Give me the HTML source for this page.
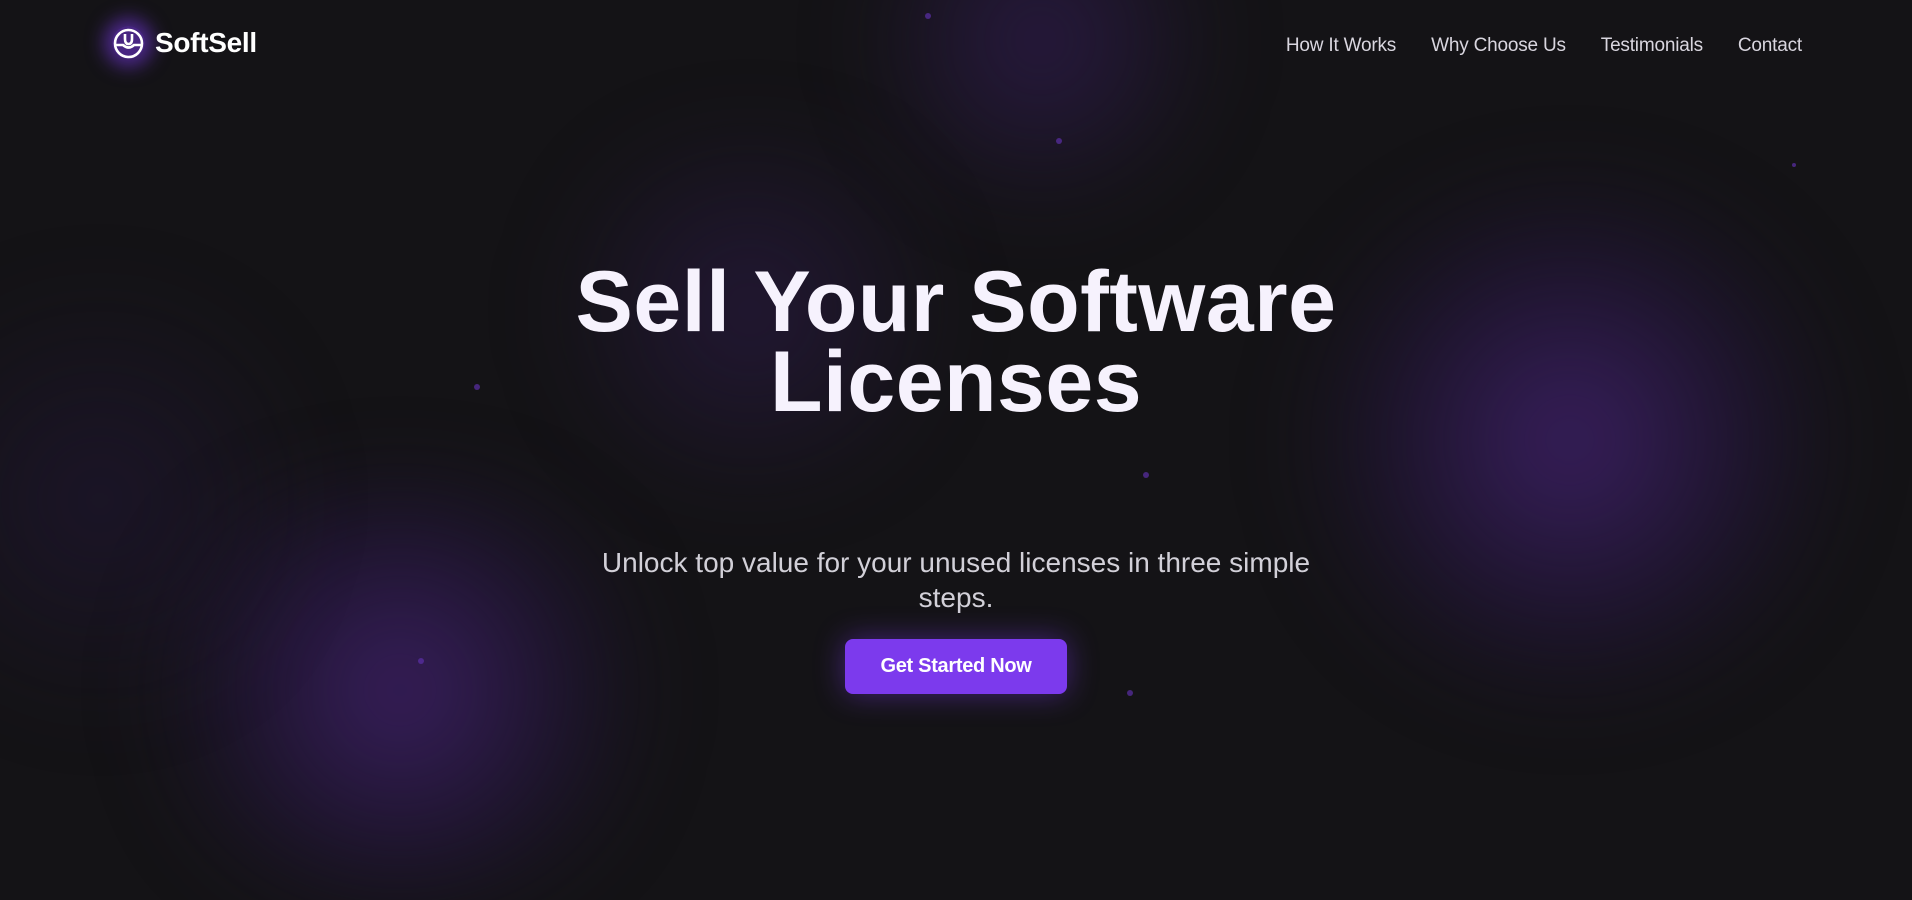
<!DOCTYPE html>
<html><head><style>
html,body{margin:0;padding:0}
body{width:1912px;height:885px;overflow:hidden;background:#141316;font-family:"Liberation Sans",sans-serif;position:relative}
.g{position:absolute;border-radius:50%;filter:blur(40px)}
.logo{position:absolute;left:112px;top:26px;width:33px;height:33px;border-radius:50%;box-shadow:0 0 18px 8px rgba(124,58,237,.55);background:rgba(124,58,237,.5)}
.brand{position:absolute;left:155px;top:27px;font-size:28px;font-weight:bold;color:#fff;letter-spacing:-0.3px}
.links{position:absolute;top:35px;right:110px;font-size:19px;color:#d9d6df;letter-spacing:-0.2px}
.links span{margin-left:35px}
h1{position:absolute;top:262px;left:0;width:1912px;text-align:center;margin:0;font-size:86px;line-height:80px;font-weight:bold;color:#f6f2fd;letter-spacing:0.5px}
p{position:absolute;top:545px;left:0;width:1912px;text-align:center;margin:0;font-size:28px;line-height:35px;color:#d2d0d8}
.btn{position:absolute;left:845px;top:639px;width:222px;height:55px;border-radius:8px;background:#7c3aed;color:#fff;font-weight:bold;font-size:20px;text-align:center;line-height:55px;box-shadow:0 0 30px rgba(124,58,237,.45);letter-spacing:-0.3px}
.d{position:absolute;width:6px;height:6px;border-radius:50%;background:#5b2fa8;opacity:.7}
</style></head><body>
<div class="g" style="left:1290px;top:180px;width:560px;height:520px;background:radial-gradient(circle,rgba(70,35,120,.75),rgba(40,22,70,.4) 50%,rgba(20,19,22,0) 72%)"></div>
<div class="g" style="left:120px;top:480px;width:560px;height:420px;background:radial-gradient(circle,rgba(70,35,120,.75),rgba(40,22,70,.4) 50%,rgba(20,19,22,0) 72%)"></div>
<div class="g" style="left:860px;top:-150px;width:360px;height:380px;background:radial-gradient(circle,rgba(55,30,95,.6),rgba(20,19,22,0) 70%)"></div>
<div class="g" style="left:520px;top:130px;width:460px;height:360px;background:radial-gradient(circle,rgba(50,28,85,.5),rgba(20,19,22,0) 70%)"></div>
<div class="g" style="left:-100px;top:250px;width:400px;height:500px;background:radial-gradient(circle,rgba(40,24,70,.4),rgba(20,19,22,0) 70%)"></div>
<div class="d" style="left:925px;top:13px"></div>
<div class="d" style="left:474px;top:384px"></div>
<div class="d" style="left:1143px;top:472px"></div>
<div class="d" style="left:1127px;top:690px"></div>
<div class="d" style="left:418px;top:658px"></div>
<div class="d" style="left:1056px;top:138px"></div>
<div class="d" style="left:1792px;top:163px;width:4px;height:4px"></div>
<div class="logo"></div>
<svg style="position:absolute;left:112px;top:27px" width="33" height="33" viewBox="0 0 33 33" fill="none" stroke="#fff" stroke-width="2.6"><circle cx="16.5" cy="16.5" r="13.5"/><path d="M4 18 H11 Q16.5 23 22 18 H29"/><path d="M13 7 V12 Q13 17 16.5 17 Q20 17 20 12 V7"/></svg>
<div class="brand">SoftSell</div>
<div class="links"><span>How It Works</span><span>Why Choose Us</span><span>Testimonials</span><span>Contact</span></div>
<h1>Sell Your Software<br>Licenses</h1>
<p>Unlock top value for your unused licenses in three simple<br>steps.</p>
<div class="btn">Get Started Now</div>
</body></html>
